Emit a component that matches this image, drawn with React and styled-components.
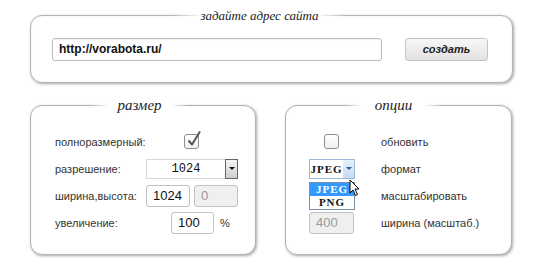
import React from 'react'
import styled, { createGlobalStyle } from 'styled-components'

const Global = createGlobalStyle`
  html, body { margin: 0; padding: 0; background: #fff; }
  body { font-family: "Liberation Sans", Arial, sans-serif; color: #333; }
`;

const Page = styled.div`
  width: 545px;
  height: 260px;
  padding: 15px 0 0 30px;
  box-sizing: border-box;
  display: flex;
  flex-direction: column;
  gap: 22px;
`;

const Card = styled.div`
  position: relative;
  box-sizing: border-box;
  width: ${p => p.w}px;
  height: ${p => p.h}px;
  border: 1px solid #b4b4b4;
  border-radius: 12px;
  box-shadow: 1px 1px 3px rgba(0,0,0,0.35), inset 0 0 2px rgba(0,0,0,0.08);
  background: #fff;
`;

const Title = styled.div`
  position: absolute;
  top: -9px;
  left: ${p => p.left}px;
  width: ${p => p.w}px;
  height: 18px;
  line-height: 17px;
  text-align: center;
  font-family: "Liberation Serif", "Times New Roman", serif;
  font-style: italic;
  font-size: ${p => p.size || 15}px;
  color: #222;
  background: linear-gradient(to right, rgba(255,255,255,0) 0%, #fff 18%, #fff 82%, rgba(255,255,255,0) 100%);
`;

const UrlRow = styled.div`
  display: flex;
  align-items: center;
  padding: 22px 0 0 21px;
  gap: 23px;
`;

const UrlInput = styled.div`
  box-sizing: border-box;
  width: 330px;
  height: 23px;
  border: 1px solid #bdbdbd;
  border-radius: 3px;
  padding: 0 6px;
  font-size: 12px;
  font-weight: bold;
  line-height: 21px;
  color: #111;
  box-shadow: inset 0 1px 1px rgba(0,0,0,0.06);
`;

const Button = styled.div`
  box-sizing: border-box;
  width: 83px;
  height: 23px;
  border: 1px solid #c4c4c4;
  border-radius: 3px;
  background: linear-gradient(#f7f7f7, #e2e2e2);
  font-size: 11px;
  font-weight: bold;
  font-style: italic;
  color: #222;
  text-align: center;
  line-height: 21px;
`;

const Row = styled.div`
  display: flex;
  gap: 29px;
`;

const Grid = styled.div`
  display: grid;
  grid-template-columns: ${p => p.cols};
  grid-auto-rows: 27px;
  align-items: center;
  padding: ${p => p.pad};
`;

const Label = styled.div`
  font-size: 11px;
  color: #333;
  white-space: nowrap;
`;

const Cell = styled.div`
  position: relative;
  display: flex;
  align-items: center;
  gap: ${p => p.gap || 4}px;
  padding-left: ${p => p.indent || 0}px;
`;

const Check = styled.div`
  position: relative;
  width: 13px;
  height: 13px;
  border: 1px solid #8c8c8c;
  border-radius: 3px;
  background: linear-gradient(#fff, #f0f0f0);
  svg { position: absolute; left: 1px; top: -5px; }
`;

const Input = styled.div`
  box-sizing: border-box;
  width: ${p => p.w}px;
  height: 22px;
  border: 1px solid #c2c2c2;
  border-radius: 3px;
  padding-left: 6px;
  font-size: 13px;
  line-height: 20px;
  color: ${p => p.disabled ? '#9a9a9a' : '#111'};
  background: ${p => p.disabled ? '#efefef' : '#fff'};
`;

const Select = styled.div`
  box-sizing: border-box;
  width: ${p => p.w}px;
  height: 20px;
  display: flex;
  border: 1px solid ${p => p.active ? '#9bb7d6' : '#d8d8d8'};
  color: #111;
  background: #fff;
`;

const SelectText = styled.div`
  flex: 1;
  line-height: 18px;
  text-align: center;
  font-family: ${p => p.serif ? '"Liberation Serif", "Times New Roman", serif' : '"Liberation Mono", "Courier New", monospace'};
  font-size: ${p => p.serif ? 11 : 12}px;
  font-weight: ${p => p.serif ? 'bold' : 'normal'};
  letter-spacing: ${p => p.serif ? 1 : 0}px;
`;

const Arrow = styled.div`
  width: 11px;
  border: ${p => p.active ? 'none' : '1px solid #666'};
  margin: ${p => p.active ? '0' : '-1px -1px -1px 0'};
  background: ${p => p.active ? 'linear-gradient(#e6f1fb, #c6dcf3)' : 'linear-gradient(#f4f4f4, #cfcfcf)'};
  display: flex;
  align-items: center;
  justify-content: center;
  &::after {
    content: '';
    border-left: 3px solid transparent;
    border-right: 3px solid transparent;
    border-top: 3px solid ${p => p.active ? '#2a5d9b' : '#111'};
  }
`;

const Menu = styled.div`
  position: absolute;
  left: 0;
  top: 23px;
  width: 46px;
  box-sizing: border-box;
  border: 1px solid #7a8ea8;
  background: #fff;
  font-family: "Liberation Serif", "Times New Roman", serif;
  font-weight: bold;
  font-size: 11px;
  letter-spacing: 1px;
  z-index: 2;
`;

const Option = styled.div`
  height: 13px;
  line-height: 13px;
  text-align: center;
  color: ${p => p.selected ? '#fff' : '#111'};
  background: ${p => p.selected ? '#3399ff' : '#fff'};
`;

const Cursor = styled.svg`
  position: absolute;
  left: 40px;
  top: 20px;
  z-index: 3;
`;

const Percent = styled.span`
  font-size: 11px;
  color: #333;
  margin-left: 1px;
`;

const CheckMark = () => (
  <svg width="16" height="17" viewBox="0 0 16 17">
    <path d="M2.5 10.5 L6 14.5 L14 1.5" fill="none" stroke="#555" strokeWidth="2" strokeLinejoin="round" />
  </svg>
);

const App = () => (
  <Page>
    <Global />
    <Card w={483} h={68}>
      <Title left={140} w={177} size={13}>задайте адрес сайта</Title>
      <UrlRow>
        <UrlInput>http://vorabota.ru/</UrlInput>
        <Button>создать</Button>
      </UrlRow>
    </Card>
    <Row>
      <Card w={226} h={150}>
        <Title left={60} w={97}>размер</Title>
        <Grid cols="91px auto" pad="22px 0 0 24px">
          <Label>полноразмерный:</Label>
          <Cell indent={38}><Check><CheckMark /></Check></Cell>
          <Label>разрешение:</Label>
          <Cell>
            <Select w={92}>
              <SelectText>1024</SelectText>
              <Arrow />
            </Select>
          </Cell>
          <Label>ширина,высота:</Label>
          <Cell>
            <Input w={44}>1024</Input>
            <Input w={44} disabled>0</Input>
          </Cell>
          <Label>увеличение:</Label>
          <Cell indent={25} gap={5}>
            <Input w={43}>100</Input>
            <Percent>%</Percent>
          </Cell>
        </Grid>
      </Card>
      <Card w={227} h={150}>
        <Title left={59} w={97}>опции</Title>
        <Grid cols="72px auto" pad="22px 0 0 23px">
          <Cell indent={15}><Check /></Cell>
          <Label>обновить</Label>
          <Cell>
            <Select w={46} active>
              <SelectText serif>JPEG</SelectText>
              <Arrow active />
            </Select>
            <Menu>
              <Option selected>JPEG</Option>
              <Option>PNG</Option>
            </Menu>
            <Cursor width="12" height="18" viewBox="0 0 12 18">
              <path d="M1 1 L1 14 L4 11 L6.5 16.5 L8.5 15.5 L6 10 L10 10 Z" fill="#fff" stroke="#000" strokeWidth="1" strokeLinejoin="round" />
            </Cursor>
          </Cell>
          <Label>формат</Label>
          <Cell />
          <Label>масштабировать</Label>
          <Cell>
            <Input w={45} disabled>400</Input>
          </Cell>
          <Label>ширина (масштаб.)</Label>
        </Grid>
      </Card>
    </Row>
  </Page>
);

export default App;
